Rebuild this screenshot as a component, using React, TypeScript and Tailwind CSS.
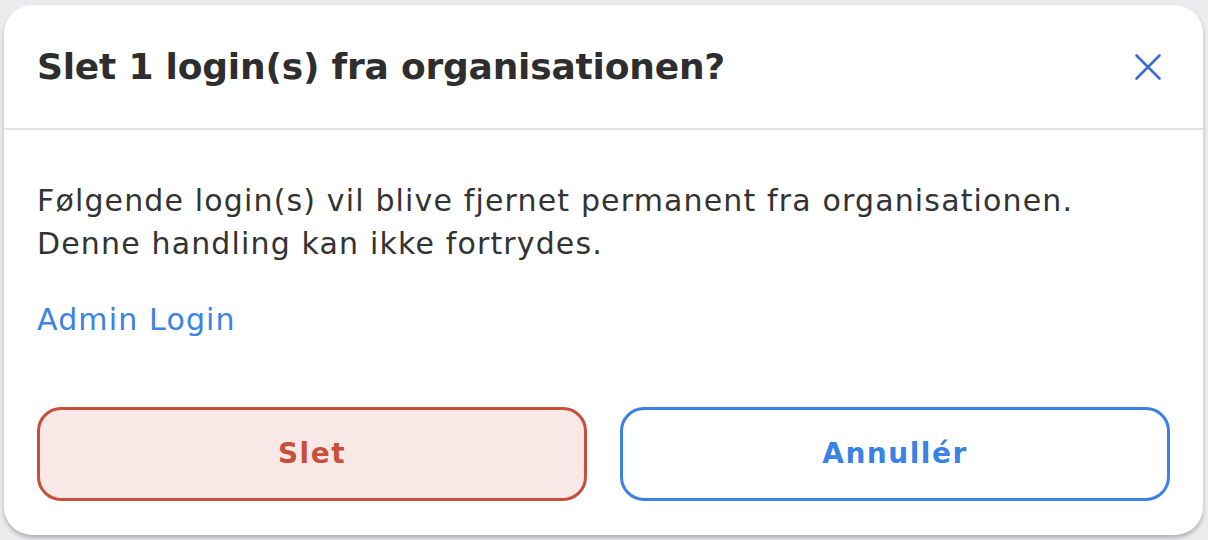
export default function App() {
  return (
    <div className="w-[1208px] h-[540px] bg-[#ececee] pt-[5px] px-[4px] overflow-hidden" style={{ fontFamily: '"DejaVu Sans", sans-serif' }}>
      <div className="w-[1199px] h-[530px] bg-white rounded-[28px] shadow-[0_3px_4px_rgba(0,0,0,0.25)] flex flex-col">
        <div className="h-[125px] flex items-center justify-between pl-[33px] pr-[42px] border-b-2 border-[#e2e2e4]">
          <h1 className="text-[36px] leading-[44px] font-bold text-[#2e2e2e] tracking-[-0.2px]">Slet 1 login(s) fra organisationen?</h1>
          <button className="text-[#3f6cd4]">
            <svg width="26" height="26" viewBox="0 0 26 26" fill="none" stroke="currentColor" strokeWidth="2.6" strokeLinecap="round">
              <path d="M1.5 1.5l23 23M24.5 1.5l-23 23" />
            </svg>
          </button>
        </div>
        <div className="flex flex-col px-[33px] pt-[49px]">
          <p className="text-[30px] leading-[43px] tracking-[1.15px] text-[#333333]">
            Følgende login(s) vil blive fjernet permanent fra organisationen.
            <br />
            Denne handling kan ikke fortrydes.
          </p>
          <p className="mt-[33px] text-[30px] leading-[43px] tracking-[1.15px] text-[#3b82e6]">Admin Login</p>
          <div className="mt-[66px] grid grid-cols-2 gap-[33px]">
            <button className="h-[94px] rounded-[24px] border-[3px] border-[#c94f3a] bg-[#f8e8e6] text-[#c94f3a] text-[28px] tracking-[1.5px] font-bold">
              Slet
            </button>
            <button className="h-[94px] rounded-[24px] border-[3px] border-[#3b82e6] bg-white text-[#3b82e6] text-[28px] tracking-[1.5px] font-bold">
              Annullér
            </button>
          </div>
        </div>
      </div>
    </div>
  )
}
